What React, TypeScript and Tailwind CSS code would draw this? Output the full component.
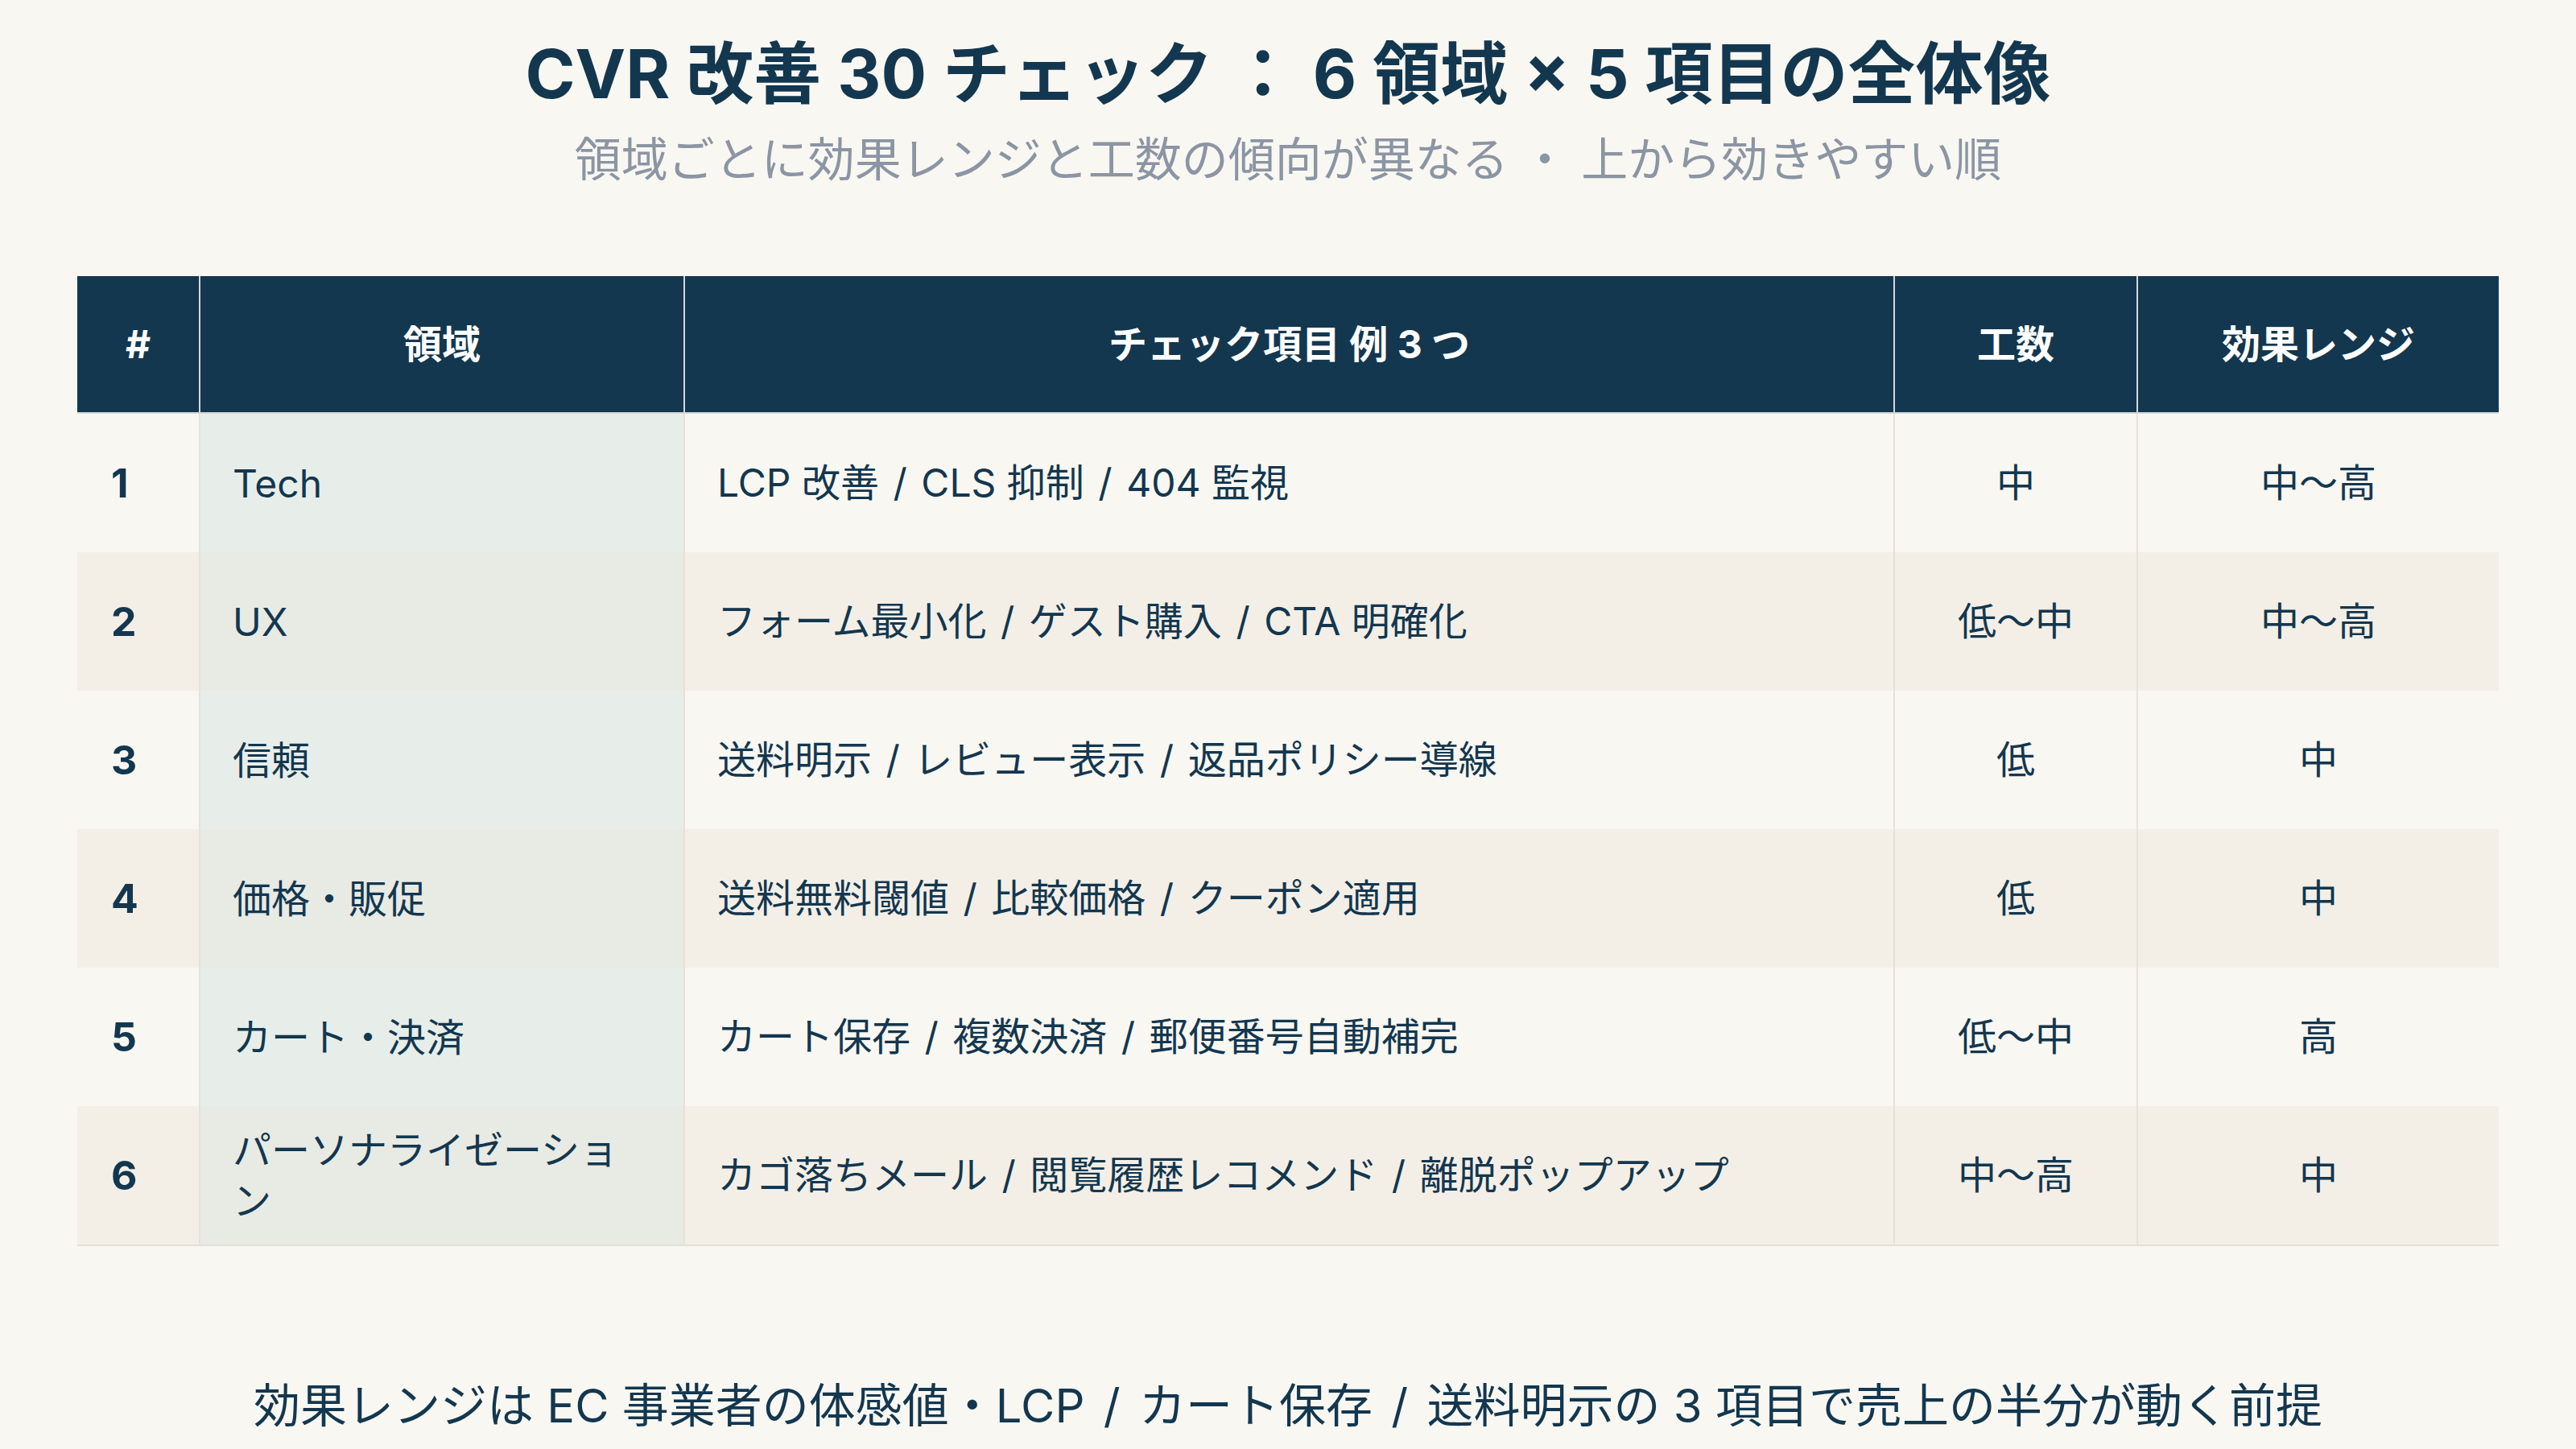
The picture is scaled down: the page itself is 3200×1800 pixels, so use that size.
import React from "react";

const rows = [
  { n: "1", area: "Tech", items: "LCP 改善 / CLS 抑制 / 404 監視", cost: "中", effect: "中〜高" },
  { n: "2", area: "UX", items: "フォーム最小化 / ゲスト購入 / CTA 明確化", cost: "低〜中", effect: "中〜高" },
  { n: "3", area: "信頼", items: "送料明示 / レビュー表示 / 返品ポリシー導線", cost: "低", effect: "中" },
  { n: "4", area: "価格・販促", items: "送料無料閾値 / 比較価格 / クーポン適用", cost: "低", effect: "中" },
  { n: "5", area: "カート・決済", items: "カート保存 / 複数決済 / 郵便番号自動補完", cost: "低〜中", effect: "高" },
  { n: "6", area: "パーソナライゼーション", items: "カゴ落ちメール / 閲覧履歴レコメンド / 離脱ポップアップ", cost: "中〜高", effect: "中" },
];

function Slashed({ text, gap }: { text: string; gap: string }) {
  const parts = text.split(" / ");
  return (
    <>
      {parts.map((p, i) => (
        <React.Fragment key={i}>
          {i > 0 && (
            <>
              {" "}
              <span className={gap}>/</span>{" "}
            </>
          )}
          {p}
        </React.Fragment>
      ))}
    </>
  );
}

export default function App() {
  return (
    <div
      className="w-[3200px] h-[1800px] bg-[#f9f7f2] text-[#13374f] flex flex-col items-center px-24 pt-[43px] overflow-hidden"
      style={{ fontFamily: 'Inter, "Noto Sans CJK JP", sans-serif' }}
    >
      <h1 className="text-[84px] leading-[98px] font-bold">
        CVR 改善 30 チェック ： 6 領域 × 5 項目の全体像
      </h1>
      <p className="mt-[20px] text-[58px] leading-[75px] text-[#8b95a3]">
        領域ごとに効果レンジと工数の傾向が異なる ・ 上から効きやすい順
      </p>

      <div className="mt-[107px] w-full grid grid-cols-[151px_602px_1503px_302px_1fr] border-b-2 border-[#e4e0d6]">
        <div className="h-[171px] bg-[#13374f] text-white font-bold text-[48px] flex items-center justify-center border-b-2 border-[#d5d8d8]">#</div>
        <div className="h-[171px] bg-[#13374f] text-white font-bold text-[48px] flex items-center justify-center border-b-2 border-l-2 border-[#d5d8d8]">領域</div>
        <div className="h-[171px] bg-[#13374f] text-white font-bold text-[48px] flex items-center justify-center border-b-2 border-l-2 border-[#d5d8d8]">チェック項目 例 3 つ</div>
        <div className="h-[171px] bg-[#13374f] text-white font-bold text-[48px] flex items-center justify-center border-b-2 border-l-2 border-[#d5d8d8]">工数</div>
        <div className="h-[171px] bg-[#13374f] text-white font-bold text-[48px] flex items-center justify-center border-b-2 border-l-2 border-[#d5d8d8]">効果レンジ</div>

        {rows.map((r, i) => {
          const even = i % 2 === 1;
          const bg = even ? "bg-[#f3efe7]" : "bg-[#f9f7f2]";
          const areaBg = even ? "bg-[#e8eae4]" : "bg-[#e7eeea]";
          return (
            <React.Fragment key={r.n}>
              <div className={`h-[172px] ${bg} flex items-center pl-[42px] text-[50px] font-bold`}>{r.n}</div>
              <div className={`h-[172px] ${areaBg} border-l-2 border-[#e6e2d8] flex items-center px-10 text-[48px] leading-[63px]`}>{r.area}</div>
              <div className={`h-[172px] ${bg} border-l-2 border-[#e6e2d8] flex items-center px-10 text-[48px]`}>
                <span>
                  <Slashed text={r.items} gap="mx-[4px]" />
                </span>
              </div>
              <div className={`h-[172px] ${bg} border-l-2 border-[#e6e2d8] flex items-center justify-center text-[48px]`}>{r.cost}</div>
              <div className={`h-[172px] ${bg} border-l-2 border-[#e6e2d8] flex items-center justify-center text-[48px]`}>{r.effect}</div>
            </React.Fragment>
          );
        })}
      </div>

      <p className="mt-[161px] text-[58px] leading-[75px]">
        <Slashed text="効果レンジは EC 事業者の体感値・LCP / カート保存 / 送料明示の 3 項目で売上の半分が動く前提" gap="mx-[7px]" />
      </p>
    </div>
  );
}
